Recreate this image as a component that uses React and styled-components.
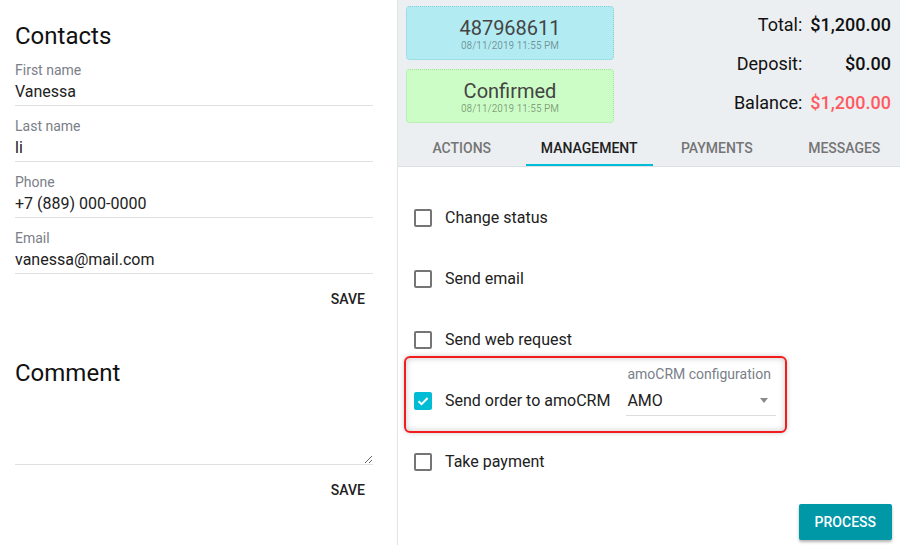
import React, { useState } from 'react';
import styled, { createGlobalStyle } from 'styled-components';

const GlobalStyle = createGlobalStyle`
  html, body {
    margin: 0;
    padding: 0;
    background: #fff;
  }
  body {
    font-family: Roboto, 'Liberation Sans', Arial, sans-serif;
    color: #212121;
    -webkit-font-smoothing: antialiased;
  }
  * {
    box-sizing: border-box;
  }
`;

const Page = styled.div`
  display: flex;
  width: 900px;
  height: 545px;
  overflow: hidden;
`;

/* ---------- left column ---------- */

const LeftPanel = styled.div`
  width: 397px;
  flex-shrink: 0;
  padding: 0 24px 0 15px;
  display: flex;
  flex-direction: column;
`;

const Heading = styled.h2`
  margin: ${(p) => p.$top || 22}px 0 0;
  font-size: 24px;
  line-height: 28px;
  font-weight: 400;
  color: #111;
`;

const Field = styled.div`
  padding-top: 12px;
  display: flex;
  flex-direction: column;
`;

const FieldLabel = styled.label`
  font-size: 14px;
  line-height: 16px;
  color: #7a8088;
  margin-bottom: 3px;
`;

const Input = styled.input`
  height: 25px;
  border: none;
  border-bottom: 1px solid #e0e0e0;
  padding: 0 0 4px;
  font-family: inherit;
  font-size: 16px;
  line-height: 20px;
  color: #212121;
  background: transparent;
  outline: none;
`;

const TextArea = styled.textarea`
  margin-top: 5px;
  height: 73px;
  border: none;
  border-bottom: 1px solid #e0e0e0;
  padding: 0;
  font-family: inherit;
  font-size: 16px;
  resize: vertical;
  outline: none;
  background: transparent;
`;

const ButtonRow = styled.div`
  display: flex;
  justify-content: flex-end;
  margin-top: 7px;
`;

const TextButton = styled.button`
  height: 36px;
  padding: 0 8px;
  border: none;
  background: transparent;
  font-family: inherit;
  font-size: 14px;
  font-weight: 500;
  color: #212121;
  text-transform: uppercase;
  cursor: pointer;
`;

/* ---------- right column ---------- */

const RightPanel = styled.div`
  flex: 1;
  min-width: 0;
  border-left: 1px solid #e2e4e6;
  display: flex;
  flex-direction: column;
`;

const Header = styled.div`
  background: #eceff2;
  border-bottom: 1px solid #dcdfe3;
`;

const HeaderTop = styled.div`
  display: flex;
  justify-content: space-between;
  padding: 6px 9px 0 8px;
`;

const Badges = styled.div`
  width: 208px;
  display: flex;
  flex-direction: column;
  gap: 9px;
`;

const Badge = styled.div`
  height: 54px;
  border: 1px dotted ${(p) => p.$border};
  background: ${(p) => p.$bg};
  border-radius: 4px;
  padding-top: 9px;
  text-align: center;
`;

const BadgeTitle = styled.div`
  font-size: 20px;
  line-height: 24px;
  color: #444;
`;

const BadgeDate = styled.div`
  font-size: 10px;
  line-height: 12px;
  color: rgba(0, 0, 0, 0.38);
`;

const Totals = styled.div`
  display: grid;
  grid-template-columns: auto auto;
  column-gap: 8px;
  row-gap: 17px;
  padding-top: 8px;
  align-content: start;
  font-size: 18px;
  line-height: 22px;
`;

const TotalLabel = styled.div`
  text-align: right;
  color: #111;
`;

const TotalValue = styled.div`
  text-align: right;
  font-weight: 500;
  color: ${(p) => p.$color || '#111'};
`;

const TabBar = styled.div`
  display: flex;
  margin-top: 7px;
  overflow: hidden;
`;

const Tab = styled.div`
  flex: 0 0 127.5px;
  height: 36px;
  display: flex;
  align-items: center;
  justify-content: center;
  font-size: 14px;
  font-weight: 500;
  text-transform: uppercase;
  color: ${(p) => (p.$active ? '#212121' : '#757575')};
  border-bottom: 2px solid ${(p) => (p.$active ? '#00bcd4' : 'transparent')};
  padding-top: 2px;
  cursor: pointer;
`;

const ActionList = styled.div`
  display: flex;
  flex-direction: column;
  padding-top: 20px;
`;

const Row = styled.label`
  height: 61px;
  display: flex;
  align-items: center;
  padding-left: 16px;
  gap: 13px;
  font-size: 16px;
  color: #212121;
  cursor: pointer;
`;

const Highlight = styled.div`
  height: 77px;
  margin: -14px 113px -2px 6px;
  border: 2px solid #f21c1c;
  border-radius: 6px;
  box-shadow: inset 0 0 6px rgba(0, 0, 0, 0.22), 0 0 5px rgba(0, 0, 0, 0.2);
  padding: 8px 9px 0 8px;
  display: flex;
  align-items: flex-start;
  gap: 16px;
`;

const HighlightCheck = styled.label`
  display: flex;
  align-items: center;
  gap: 13px;
  height: 31px;
  margin-top: 19px;
  font-size: 16px;
  color: #212121;
  white-space: nowrap;
  cursor: pointer;
`;

const Box = styled.span`
  width: 18px;
  height: 18px;
  flex-shrink: 0;
  border-radius: 2px;
  border: 2px solid ${(p) => (p.$checked ? '#00bcd4' : '#757575')};
  background: ${(p) => (p.$checked ? '#00bcd4' : 'transparent')};
  display: flex;
  align-items: center;
  justify-content: center;
`;

const Select = styled.div`
  flex: 1;
  display: flex;
  flex-direction: column;
`;

const SelectLabel = styled.div`
  font-size: 14px;
  line-height: 16px;
  color: #7a8088;
  padding-left: 1px;
`;

const SelectValue = styled.div`
  margin-top: 3px;
  height: 31px;
  display: flex;
  align-items: center;
  justify-content: space-between;
  border-bottom: 1px solid #dcdcdc;
  padding: 0 8px 0 1px;
  font-size: 16px;
  color: #212121;
`;

const Arrow = styled.span`
  width: 0;
  height: 0;
  border-left: 4.5px solid transparent;
  border-right: 4.5px solid transparent;
  border-top: 5px solid #8a8a8a;
`;

const Footer = styled.div`
  margin-top: auto;
  display: flex;
  justify-content: flex-end;
  padding: 0 8px 5px 0;
`;

const PrimaryButton = styled.button`
  height: 36px;
  padding: 0 16px;
  border: none;
  border-radius: 2px;
  background: #0097a7;
  color: #fff;
  font-family: inherit;
  font-size: 14px;
  font-weight: 500;
  text-transform: uppercase;
  box-shadow: 0 2px 3px rgba(0, 0, 0, 0.3);
  cursor: pointer;
`;

const Checkbox = ({ checked }) => (
  <Box $checked={checked}>
    {checked && (
      <svg width="14" height="14" viewBox="0 0 14 14">
        <path d="M2.5 7.2 L5.6 10.2 L11.6 4" fill="none" stroke="#fff" strokeWidth="2" />
      </svg>
    )}
  </Box>
);

const contacts = [
  { label: 'First name', value: 'Vanessa' },
  { label: 'Last name', value: 'li' },
  { label: 'Phone', value: '+7 (889) 000-0000' },
  { label: 'Email', value: 'vanessa@mail.com' },
];

const tabs = ['Actions', 'Management', 'Payments', 'Messages'];

export default function App() {
  const [tab, setTab] = useState(1);

  return (
    <>
      <GlobalStyle />
      <Page>
        <LeftPanel>
          <Heading>Contacts</Heading>
          {contacts.map((c) => (
            <Field key={c.label}>
              <FieldLabel>{c.label}</FieldLabel>
              <Input defaultValue={c.value} />
            </Field>
          ))}
          <ButtonRow>
            <TextButton>Save</TextButton>
          </ButtonRow>
          <Heading $top={42}>Comment</Heading>
          <TextArea />
          <ButtonRow>
            <TextButton>Save</TextButton>
          </ButtonRow>
        </LeftPanel>

        <RightPanel>
          <Header>
            <HeaderTop>
              <Badges>
                <Badge $bg="#b2ebf2" $border="#86d0dc">
                  <BadgeTitle>487968611</BadgeTitle>
                  <BadgeDate>08/11/2019 11:55 PM</BadgeDate>
                </Badge>
                <Badge $bg="#ccfdc6" $border="#a3e39c">
                  <BadgeTitle>Confirmed</BadgeTitle>
                  <BadgeDate>08/11/2019 11:55 PM</BadgeDate>
                </Badge>
              </Badges>
              <Totals>
                <TotalLabel>Total:</TotalLabel>
                <TotalValue>$1,200.00</TotalValue>
                <TotalLabel>Deposit:</TotalLabel>
                <TotalValue>$0.00</TotalValue>
                <TotalLabel>Balance:</TotalLabel>
                <TotalValue $color="#ff5a5f">$1,200.00</TotalValue>
              </Totals>
            </HeaderTop>
            <TabBar>
              {tabs.map((t, i) => (
                <Tab key={t} $active={i === tab} onClick={() => setTab(i)}>
                  {t}
                </Tab>
              ))}
            </TabBar>
          </Header>

          <ActionList>
            <Row>
              <Checkbox />
              Change status
            </Row>
            <Row>
              <Checkbox />
              Send email
            </Row>
            <Row>
              <Checkbox />
              Send web request
            </Row>
            <Highlight>
              <HighlightCheck>
                <Checkbox checked />
                Send order to amoCRM
              </HighlightCheck>
              <Select>
                <SelectLabel>amoCRM configuration</SelectLabel>
                <SelectValue>
                  AMO
                  <Arrow />
                </SelectValue>
              </Select>
            </Highlight>
            <Row>
              <Checkbox />
              Take payment
            </Row>
          </ActionList>

          <Footer>
            <PrimaryButton>Process</PrimaryButton>
          </Footer>
        </RightPanel>
      </Page>
    </>
  );
}
